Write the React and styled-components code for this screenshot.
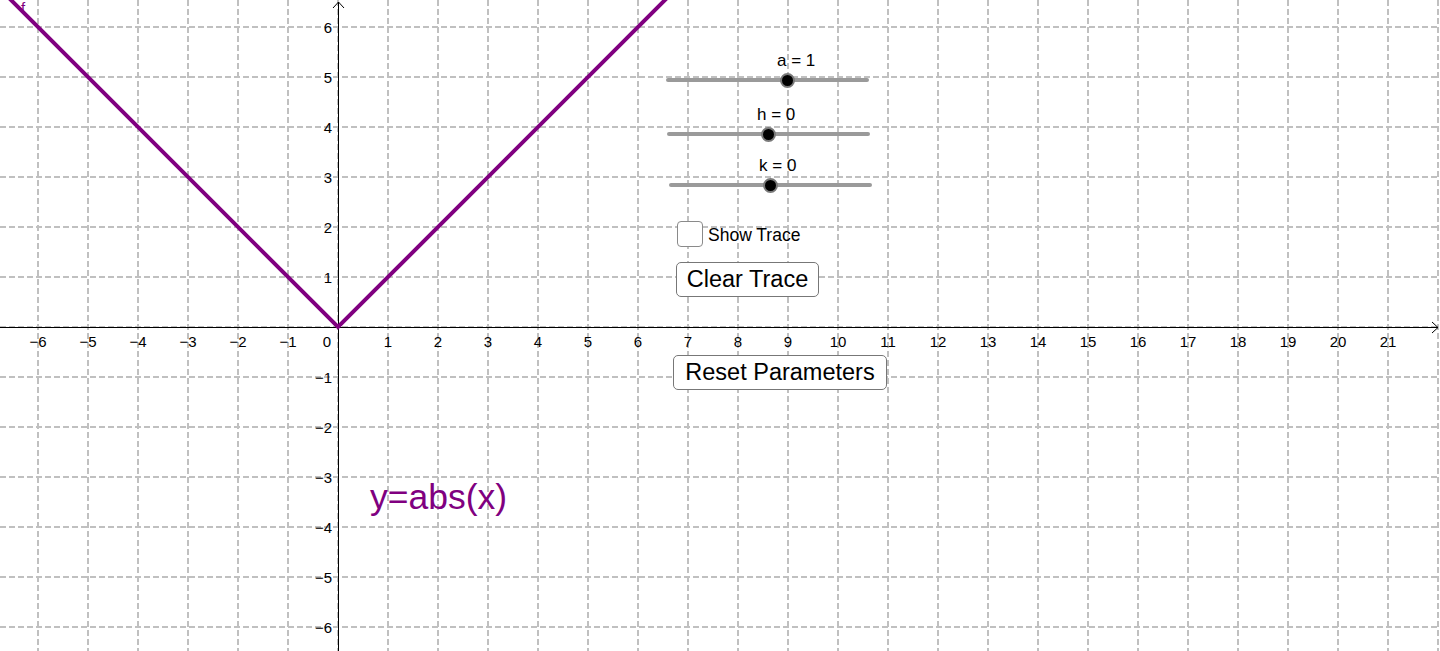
import React from "react";
import styled, { createGlobalStyle } from "styled-components";

// graph geometry
const W = 1440;
const H = 651;
const OX = 338;
const OY = 327;
const UNIT = 50;

const range = (a, b) => Array.from({ length: b - a + 1 }, (_, i) => a + i);
const fmt = (n) => (n < 0 ? `\u2212${-n}` : `${n}`);

const xs = range(-7, 22).filter((k) => OX + k * UNIT > 0 && OX + k * UNIT < W);
const ys = range(-7, 7).filter((k) => OY - k * UNIT > 0 && OY - k * UNIT < H);

// each slider: box top-left, label indent, track width, knob offset
const sliders = [
  { name: "a", value: 1, x: 666, y: 52, indent: 111, w: 203, knob: 121 },
  { name: "h", value: 0, x: 667, y: 106, indent: 90, w: 203, knob: 101 },
  { name: "k", value: 0, x: 669, y: 157, indent: 90, w: 203, knob: 101 },
];

const Graph = () => (
  <Plot width={W} height={H} viewBox={`0 0 ${W} ${H}`}>
    <g stroke="#c0c0c0" strokeWidth="2" strokeDasharray="6 3">
      {xs.map((k) => (
        <line key={`v${k}`} x1={OX + k * UNIT} y1={0} x2={OX + k * UNIT} y2={H} />
      ))}
      {ys.map((k) => (
        <line key={`h${k}`} x1={0} y1={OY - k * UNIT} x2={W} y2={OY - k * UNIT} />
      ))}
    </g>

    <g stroke="#000" strokeWidth="1" fill="none">
      <line x1={0} y1={OY + 0.5} x2={W - 2} y2={OY + 0.5} />
      <polyline points={`${W - 8},${OY - 5} ${W - 2},${OY + 0.5} ${W - 8},${OY + 6}`} />
      <line x1={OX + 0.5} y1={2} x2={OX + 0.5} y2={H} />
      <polyline points={`${OX - 5},${8} ${OX + 0.5},${2} ${OX + 6},${8}`} />
    </g>

    <g fontFamily='"Liberation Sans", Arial, sans-serif' fontSize="15" fill="#000">
      {xs
        .filter((k) => k !== 0 && k >= -6 && k <= 21)
        .map((k) => (
          <text key={`xl${k}`} x={OX + k * UNIT} y={OY + 20} textAnchor="middle">
            {fmt(k)}
          </text>
        ))}
      <text x={OX - 11} y={OY + 20} textAnchor="middle">
        0
      </text>
      {ys
        .filter((k) => k !== 0)
        .map((k) => (
          <text key={`yl${k}`} x={OX - 6} y={OY - k * UNIT + 6} textAnchor="end">
            {fmt(k)}
          </text>
        ))}
    </g>

    <polyline
      points={`${OX - 400},${OY - 400} ${OX},${OY} ${OX + 400},${OY - 400}`}
      fill="none"
      stroke="#800080"
      strokeWidth="4"
    />
    <text x={21} y={13} fill="#800080" fontSize="15" fontFamily='"Liberation Sans", Arial, sans-serif'>
      f
    </text>
  </Plot>
);

const Slider = ({ s }) => (
  <SliderBox $x={s.x} $y={s.y}>
    <SliderLabel $indent={s.indent}>
      {s.name} = {s.value}
    </SliderLabel>
    <Track $w={s.w}>
      <Knob $pos={s.knob} />
    </Track>
  </SliderBox>
);

const App = () => {
  return (
    <>
      <GlobalStyle />
      <Canvas>
        <Graph />

        {sliders.map((s) => (
          <Slider key={s.name} s={s} />
        ))}

        <CheckRow $x={677} $y={221}>
          <Box />
          <CheckText>Show Trace</CheckText>
        </CheckRow>

        <Button $x={676} $y={262} $w={143}>
          Clear Trace
        </Button>
        <Button $x={673} $y={355} $w={214}>
          Reset Parameters
        </Button>

        <Formula>y=abs(x)</Formula>
      </Canvas>
    </>
  );
};

//styled components
const GlobalStyle = createGlobalStyle`
  html, body {
    margin: 0;
    padding: 0;
    background: #ffffff;
    overflow: hidden;
  }
  body {
    font-family: "Liberation Sans", Arial, sans-serif;
  }
`;

const Canvas = styled.div`
  position: relative;
  width: 1440px;
  height: 651px;
  overflow: hidden;
  background: #ffffff;
`;

const Plot = styled.svg`
  position: absolute;
  left: 0;
  top: 0;
  display: block;
`;

const SliderBox = styled.div`
  position: absolute;
  left: ${(p) => p.$x}px;
  top: ${(p) => p.$y}px;
  display: flex;
  flex-direction: column;
  gap: 9px;
`;

const SliderLabel = styled.div`
  padding-left: ${(p) => p.$indent}px;
  font-size: 17px;
  line-height: 17px;
  color: #000;
  white-space: nowrap;
`;

const Track = styled.div`
  position: relative;
  width: ${(p) => p.$w}px;
  height: 4px;
  border-radius: 2px;
  background: #9a9a9a;
`;

const Knob = styled.span`
  position: absolute;
  left: ${(p) => p.$pos}px;
  top: 50%;
  width: 11px;
  height: 11px;
  margin: -7.5px 0 0 -7.5px;
  border: 2px solid #7a7a7a;
  border-radius: 50%;
  background: #000;
`;

const CheckRow = styled.label`
  position: absolute;
  left: ${(p) => p.$x}px;
  top: ${(p) => p.$y}px;
  display: flex;
  align-items: center;
  gap: 5px;
`;

const Box = styled.span`
  width: 24px;
  height: 24px;
  border: 1px solid #8a8a8a;
  border-radius: 4px;
  background: #fff;
`;

const CheckText = styled.span`
  font-size: 17.5px;
  color: #000;
  padding-top: 2px;
`;

const Button = styled.button`
  position: absolute;
  left: ${(p) => p.$x}px;
  top: ${(p) => p.$y}px;
  width: ${(p) => p.$w}px;
  height: 35px;
  padding: 0;
  display: flex;
  align-items: center;
  justify-content: center;
  border: 1px solid #777;
  border-radius: 5px;
  background: #fff;
  font-family: "Liberation Sans", Arial, sans-serif;
  font-size: 23.5px;
  color: #000;
  box-sizing: border-box;
`;

const Formula = styled.div`
  position: absolute;
  left: 370px;
  top: 477px;
  font-size: 35.5px;
  line-height: 40px;
  color: #800080;
  white-space: nowrap;
`;

export default App;
